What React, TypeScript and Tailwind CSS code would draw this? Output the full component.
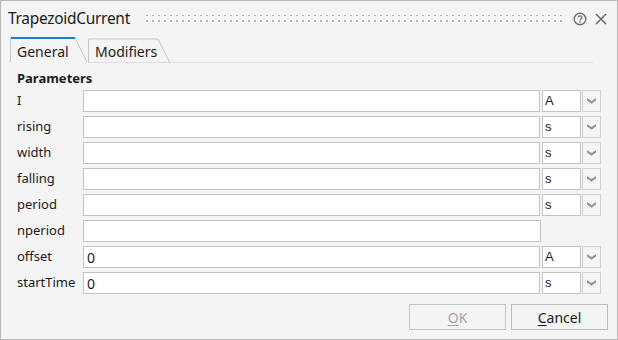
import React from "react";

const font = { fontFamily: '"Segoe UI", "Noto Sans", "Open Sans", sans-serif' };

interface Row {
    label: string;
    value: string;
    unit?: string;
}

const rows: Row[] = [
    { label: "I", value: "", unit: "A" },
    { label: "rising", value: "", unit: "s" },
    { label: "width", value: "", unit: "s" },
    { label: "falling", value: "", unit: "s" },
    { label: "period", value: "", unit: "s" },
    { label: "nperiod", value: "" },
    { label: "offset", value: "0", unit: "A" },
    { label: "startTime", value: "0", unit: "s" },
];

const Gripper = () => (
    <svg className="flex-1 h-[10px]" preserveAspectRatio="none">
        <defs>
            <pattern id="dots" width="6" height="6" patternUnits="userSpaceOnUse">
                <rect x="0" y="0" width="2" height="2" fill="#b4b4b4" />
            </pattern>
        </defs>
        <rect x="0" y="1" width="100%" height="8" fill="url(#dots)" />
    </svg>
);

const TabShape = ({ active, width }: { active: boolean; width: number }) => (
    <svg className="absolute left-0 top-0" width={width + 1} height={26}>
        <path
            d={`M0.5 25 L0.5 1 L${width - 12} 1 L${width} 25`}
            fill="none"
            stroke="#c6c6c6"
            strokeWidth={1}
        />
        {active && <rect x="1" y="0" width={width - 13} height="2" fill="#1a80c4" />}
    </svg>
);

const Chevron = () => (
    <svg width="9" height="6" viewBox="0 0 9 6">
        <path d="M0 0 L4.5 3 L9 0 L9 2.6 L4.5 5.8 L0 2.6 Z" fill="#959595" />
    </svg>
);

export default function App() {
    return (
        <div style={font} className="w-[618px] h-[340px] bg-[#f4f4f4] border border-[#b8b8b8] flex flex-col text-[#1b1b1b] overflow-hidden">
            {/* title bar */}
            <div className="h-[36px] flex items-center pl-[7px] pr-[10px] shrink-0">
                <span className="text-[15.5px] leading-none tracking-[-0.3px]">TrapezoidCurrent</span>
                <div className="flex-1 flex items-center ml-[16px] mr-[8px]">
                    <Gripper />
                </div>
                <svg width="14" height="14" viewBox="0 0 14 14" className="mr-[8px]">
                    <circle cx="7" cy="7" r="5.8" fill="none" stroke="#6f6f6f" strokeWidth="1.4" />
                    <path d="M5.1 5.6 C5.1 3.4 8.9 3.4 8.9 5.5 C8.9 6.9 7 6.9 7 8.4" fill="none" stroke="#6f6f6f" strokeWidth="1.3" />
                    <rect x="6.3" y="9.3" width="1.4" height="1.4" fill="#6f6f6f" />
                </svg>
                <svg width="12" height="12" viewBox="0 0 12 12">
                    <path d="M1 1 L11 11 M11 1 L1 11" stroke="#6a6a6a" strokeWidth="1.5" />
                </svg>
            </div>

            {/* tabs */}
            <div className="h-[26px] flex items-end shrink-0 pl-[9px] pr-[24px]">
                <div className="relative w-[77px] h-[26px] flex items-center pl-[7px] pt-[2px] text-[14px]">
                    <TabShape active width={77} />
                    <span className="relative">General</span>
                </div>
                <div className="relative w-[82px] h-[25px] ml-[1px] flex items-center pl-[7px] pt-[2px] text-[14px] border-b border-[#dedede]">
                    <TabShape active={false} width={82} />
                    <span className="relative">Modifiers</span>
                </div>
                <div className="flex-1 border-b border-[#e2e2e2]" />
            </div>

            {/* content */}
            <div className="flex flex-col pl-[16px] pr-[16px] pt-[5px]">
                <div className="h-[22px] text-[13px] font-bold leading-[20px]">Parameters</div>
                <div className="flex flex-col gap-[4px]">
                    {rows.map((r) => (
                        <div key={r.label} className="flex items-center h-[22px]">
                            <div className="w-[66px] text-[13px]">{r.label}</div>
                            <div className="w-[458px] h-[22px] bg-white border border-[#c3c3c3] flex items-center pl-[3px] text-[14px]">
                                {r.value}
                            </div>
                            {r.unit && (
                                <>
                                    <div
                                        className="ml-[2px] w-[39px] h-[22px] bg-white border border-[#c3c3c3] flex items-center pl-[2px] text-[13px]"
                                        style={{ fontFamily: '"Liberation Sans", Arial, sans-serif' }}
                                    >
                                        {r.unit}
                                    </div>
                                    <div className="ml-[1px] w-[19px] h-[22px] border border-[#d0d0d0] flex items-center justify-center">
                                        <Chevron />
                                    </div>
                                </>
                            )}
                        </div>
                    ))}
                </div>
                <div className="flex justify-end gap-[5px] mt-[10px] -mr-[7px]">
                    <button className="w-[97px] h-[26px] border border-[#c3c3c3] bg-[#f4f4f4] text-[14px] text-[#a3a3a3]">
                        <span className="underline underline-offset-2">O</span>K
                    </button>
                    <button className="w-[97px] h-[26px] border border-[#bdbdbd] bg-[#f4f4f4] text-[14px]">
                        <span className="underline underline-offset-2">C</span>ancel
                    </button>
                </div>
            </div>
        </div>
    );
}
